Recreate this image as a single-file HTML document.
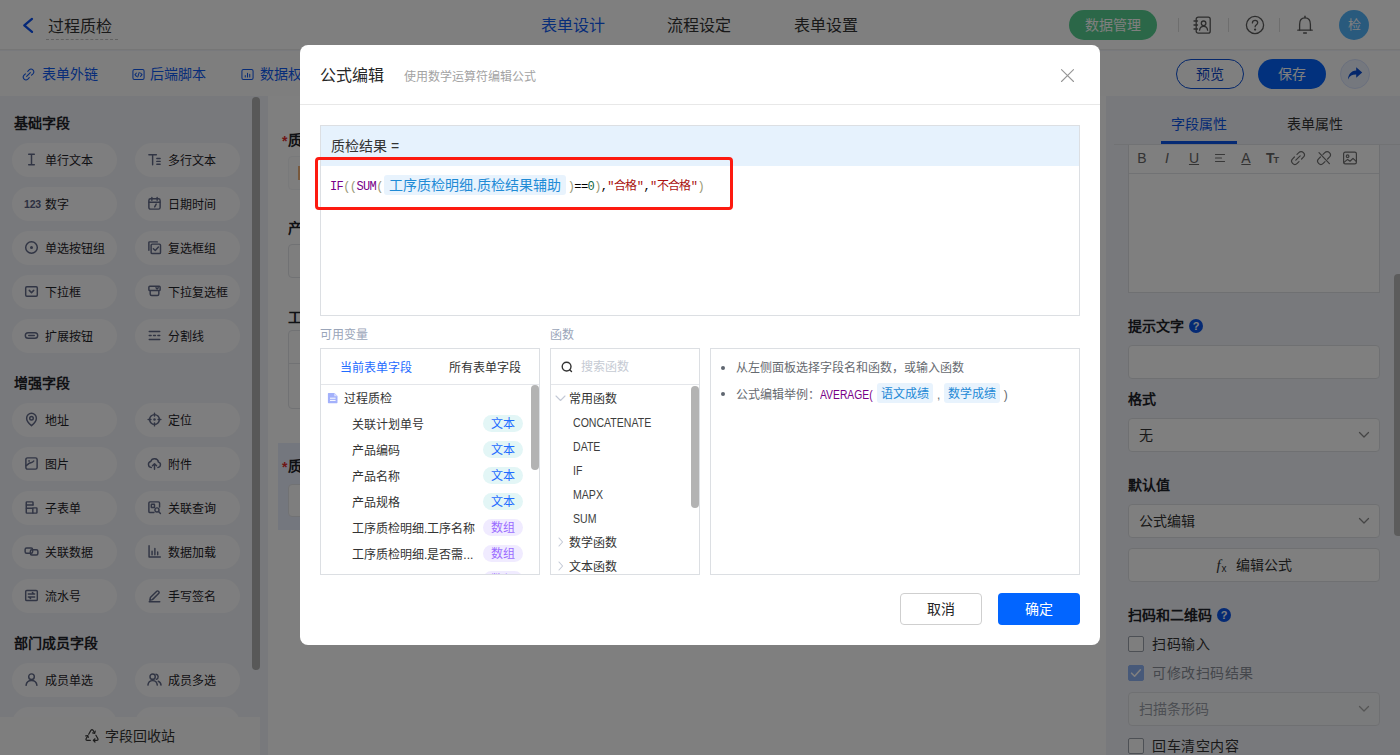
<!DOCTYPE html>
<html lang="zh-CN">
<head>
<meta charset="utf-8">
<title>公式编辑</title>
<style>
*{box-sizing:border-box;margin:0;padding:0}
html,body{width:1400px;height:755px;overflow:hidden;background:#f1f3f8}
body{font-family:"Liberation Sans",sans-serif;font-size:14px;color:#1f2329;position:relative}
.abs{position:absolute}
svg{display:block}
/* ---------- top bar ---------- */
#top{position:absolute;left:0;top:0;width:1400px;height:50px;background:#fff;border-bottom:1px solid #ececec}
#top .title{position:absolute;left:46px;top:15px;font-size:16px;line-height:24px;color:#333;border-bottom:1px dashed #c4c4c4;padding:0 0 0 2px;width:72px;white-space:nowrap}
#top .tab{position:absolute;top:14px;font-size:16px;line-height:24px;color:#333;white-space:nowrap}
#top .tab.on{color:#0f5af2}
#top .green{position:absolute;left:1069px;top:10px;width:88px;height:30px;border-radius:15px;background:#56cf90;color:#fff;font-size:14px;line-height:31px;text-align:center}
#top .sep{position:absolute;top:18px;width:1px;height:14px;background:#dcdcdc}
#top .avatar{position:absolute;left:1339px;top:10px;width:30px;height:30px;border-radius:15px;background:#52b4fb;color:#fff;font-size:13px;line-height:30px;text-align:center}
/* ---------- tool bar ---------- */
#bar{position:absolute;left:0;top:51px;width:1400px;height:45px;background:#fdfdfd}
#bar .lk{position:absolute;top:12px;font-size:14px;line-height:22px;color:#0f5af2;white-space:nowrap}
#bar .pill{position:absolute;top:8px;height:30px;border-radius:15px;font-size:14px;line-height:28px;text-align:center}
/* ---------- sidebar ---------- */
#side{position:absolute;left:0;top:96px;width:260px;height:659px;background:#f1f3f8}
#side h4{position:absolute;left:14px;font-size:14px;line-height:20px;font-weight:bold;color:#1f2329}
#side .f{position:absolute;width:105px;height:34px;border-radius:17px;background:#fdfdfe;font-size:12px;line-height:34px;color:#1f2329;white-space:nowrap}
#side .f span{position:absolute;left:33px;top:1px}
#side .f svg{position:absolute;left:12px;top:9px;width:15px;height:15px}
#side .sb{position:absolute;left:252px;top:1px;width:8px;height:573px;border-radius:4px;background:#b0b0b0}
#side .bin{position:absolute;left:0;top:621px;width:260px;height:38px;background:#fdfdfd;font-size:14px;line-height:38px;color:#333}
/* ---------- canvas ---------- */
#canvas{position:absolute;left:260px;top:96px;width:846px;height:659px;background:#f1f3f8}

#canvas .form{position:absolute;left:8px;top:0;width:838px;height:659px;background:#fff}
#canvas .l{position:absolute;left:20px;font-size:14px;line-height:20px;font-weight:bold;color:#1f2329;white-space:nowrap}
#canvas .l i{font-style:normal;color:#e02d2d;position:absolute;left:-6px;top:1px;font-weight:bold}
#canvas .bx{position:absolute;left:20px;width:380px;height:34px;border:1px solid #e2e4e8;border-radius:4px;background:#fcfcfd}
/* ---------- right panel ---------- */
#right{position:absolute;left:1106px;top:96px;width:294px;height:659px;background:#f1f3f8}

#right .tb{position:absolute;top:17px;font-size:14px;line-height:22px;color:#333;white-space:nowrap}
#right .lb{position:absolute;left:22px;font-size:14px;line-height:20px;font-weight:bold;color:#1f2329;white-space:nowrap}
#right .in{position:absolute;left:22px;width:252px;height:34px;border:1px solid #dfe1e5;border-radius:4px;background:#fff;font-size:14px;line-height:32px;color:#333;padding-left:10px;white-space:nowrap}
#right .q{position:absolute;width:14px;height:14px;border-radius:7px;background:#0b55e8;color:#fff;font-size:11px;font-weight:bold;line-height:14px;text-align:center}
#right .ck{position:absolute;left:22px;width:16px;height:16px;border:1px solid #9aa0ab;border-radius:2px;background:#fdfdfd}
#right .ct{position:absolute;left:46px;font-size:14px;letter-spacing:.55px;line-height:20px;color:#333;white-space:nowrap}
#right .ti{position:absolute;top:53px;font-size:14px;line-height:18px;color:#666;width:20px;text-align:center}
/* ---------- overlay + modal ---------- */
#mask{position:absolute;left:0;top:0;width:1400px;height:755px;background:rgba(0,0,0,.5)}
#modal{position:absolute;left:300px;top:45px;width:800px;height:600px;background:#fff;border-radius:8px}

#modal .hd{position:absolute;left:0;top:0;width:800px;height:60px;border-bottom:1px solid #e8e8e8}
#modal .hd b{position:absolute;left:20px;top:19px;font-size:16px;line-height:24px;font-weight:normal;color:#262626;white-space:nowrap}
#modal .hd span{position:absolute;left:104px;top:23px;font-size:12px;line-height:18px;color:#a3a3a3;white-space:nowrap}
#ed{position:absolute;left:20px;top:80px;width:760px;height:191px;border:1px solid #dcdfe3;background:#fff}
#ed .nm{position:absolute;left:0;top:0;width:758px;height:40px;background:#e6f2fd;font-size:14px;line-height:40px;padding-left:10px;color:#333;white-space:pre}
#ed .ln{position:absolute;left:9px;top:49px;height:24px;line-height:24px;font-family:"Liberation Mono",monospace;font-size:12px;letter-spacing:-.6px;color:#000;white-space:pre}
#ed .k{color:#708}#ed .b{color:#997}#ed .n{color:#164}#ed .s{color:#a11}
#ed .chip{display:inline-block;vertical-align:top;margin:0 2px 0 1px;height:20px;line-height:20px;padding:0 5px;border-radius:3px;background:#e8f3fd;color:#1f8bd6;font-family:"Liberation Sans",sans-serif;font-size:14px;letter-spacing:0}
#redbox{position:absolute;left:15px;top:112px;width:418px;height:53px;border:3px solid #fd1a10;border-radius:4px}
#modal .cap{position:absolute;top:281px;font-size:12px;line-height:18px;color:#9aa5b9;white-space:nowrap}
#modal .box{position:absolute;top:303px;height:227px;border:1px solid #dcdfe3;background:#fff;overflow:hidden}
#modal .box .hr{position:absolute;left:0;top:35px;width:100%;height:1px;background:#e4e6ea}
#modal .box .t{position:absolute;margin-top:1px;font-size:12px;line-height:18px;color:#333;white-space:nowrap}
#modal .tag{position:absolute;left:162px;width:40px;height:17px;margin-top:-1px;border-radius:9px;font-size:12px;line-height:19px;text-align:center;overflow:hidden}
#modal .tag.a{background:#e3f6f6;color:#1f6cff}
#modal .tag.g{background:#f0ebff;color:#9a6bff}
#modal .sbar{position:absolute;width:8px;border-radius:4px;background:#b3b3b3}
#modal .fn{position:absolute;left:22px;font-size:12px;line-height:18px;color:#3d3d3d;white-space:nowrap;transform:scaleX(.88);transform-origin:0 50%}
#modal .hp{position:absolute;left:25px;margin-top:1px;font-size:12px;line-height:20px;color:#666a70;white-space:nowrap}
#modal .hp i{position:absolute;left:-15px;top:8px;width:4px;height:4px;border-radius:2px;background:#5f6670}
#modal .hp .c{display:inline-block;position:relative;top:-1px;height:20px;line-height:22px;margin:0 .4px;padding:0 4px;border-radius:3px;background:#e8f3fd;color:#2389d6;letter-spacing:0}
#modal .btn{position:absolute;top:548px;width:82px;height:32px;border-radius:4px;font-size:14px;line-height:30px;text-align:center}
</style>
</head>
<body>
<div id="top">
<svg class="abs" style="left:20px;top:15px" width="16" height="21" viewBox="0 0 16 21"><path d="M12 3.9 L4.3 10.4 L12 16.9" fill="none" stroke="#0a50f0" stroke-width="2.3" stroke-linecap="round" stroke-linejoin="round"/></svg>
<div class="title">过程质检</div>
<div class="tab on" style="left:541px">表单设计</div>
<div class="tab" style="left:667px">流程设定</div>
<div class="tab" style="left:794px">表单设置</div>
<div class="green">数据管理</div>
<div class="sep" style="left:1178px"></div>
<svg class="abs" style="left:1193px;top:16px" width="19" height="19" viewBox="0 0 19 19" fill="none" stroke="#5a5a5a" stroke-width="1.3" stroke-linecap="round" stroke-linejoin="round"><rect x="3.2" y="1.2" width="14" height="16" rx="2"/><path d="M1 5h3.5M1 9h3.5M1 13h3.5"/><circle cx="10.6" cy="7.3" r="2.3"/><path d="M6.6 14.2c.3-2.6 1.9-3.8 4-3.8s3.7 1.2 4 3.8"/></svg>
<div class="sep" style="left:1228px"></div>
<svg class="abs" style="left:1245px;top:15px" width="20" height="20" viewBox="0 0 20 20" fill="none" stroke="#5a5a5a" stroke-width="1.3" stroke-linecap="round"><circle cx="10" cy="10" r="8.6"/><path d="M7.4 7.9c0-1.6 1.1-2.6 2.7-2.6s2.6 1 2.6 2.4c0 1.9-2.6 2-2.6 4.1"/><circle cx="10.1" cy="14.6" r=".5" fill="#5a5a5a"/></svg>
<div class="sep" style="left:1279px"></div>
<svg class="abs" style="left:1296px;top:15px" width="18" height="20" viewBox="0 0 18 20" fill="none" stroke="#5a5a5a" stroke-width="1.3" stroke-linecap="round" stroke-linejoin="round"><path d="M9 1.2v1.3"/><path d="M3.6 15V9.4C3.6 5.4 5.8 2.9 9 2.9s5.4 2.5 5.4 6.5V15"/><path d="M1.8 15.2h14.4"/><path d="M7.6 18h2.8"/></svg>
<div class="avatar">检</div>
</div>
<div id="bar">
<svg class="abs" style="left:22px;top:17px" width="13" height="13" viewBox="0 0 14 14" fill="none" stroke="#1058ee" stroke-width="1.15" stroke-linecap="round"><path d="M6.2 3.6l1.5-1.5a2.9 2.9 0 0 1 4.1 4.1l-1.5 1.5"/><path d="M7.8 10.4l-1.5 1.5a2.9 2.9 0 0 1-4.1-4.1l1.5-1.5"/><path d="M5 9l4-4"/></svg>
<div class="lk" style="left:42px">表单外链</div>
<svg class="abs" style="left:132px;top:17px" width="13" height="13" viewBox="0 0 14 14" fill="none" stroke="#1058ee" stroke-width="1.1" stroke-linecap="round" stroke-linejoin="round"><rect x="1" y="1.5" width="12" height="11" rx="1.6"/><path d="M4.8 5.4L3.2 7.2l1.6 1.8M9.2 5.4l1.6 1.8-1.6 1.8M7.8 4.8L6.2 9.6"/></svg>
<div class="lk" style="left:150px">后端脚本</div>
<svg class="abs" style="left:241px;top:17px" width="13" height="13" viewBox="0 0 14 14" fill="none" stroke="#1058ee" stroke-width="1.1" stroke-linecap="round" stroke-linejoin="round"><rect x="1" y="1.5" width="12" height="11" rx="1.6"/><path d="M4.6 9.6V8M7 9.6V5.6M9.4 9.6V6.8"/></svg>
<div class="lk" style="left:260px">数据权限</div>
<div class="pill" style="left:1176px;width:68px;border:1px solid #0a4fd6;color:#0a45c9;background:#fff">预览</div>
<div class="pill" style="left:1258px;width:68px;background:#0463fa;color:#fff;line-height:30px">保存</div>
<div class="abs" style="left:1340px;top:8px;width:30px;height:30px;border-radius:15px;background:#eaf0fd;border:1px solid #d5e0fb"></div>
<svg class="abs" style="left:1346px;top:14px" width="18" height="18" viewBox="0 0 18 18"><path d="M10.2 2.2l6 5.3-6 5.3V9.6C6.4 9.5 3.8 10.8 2 14.4 2.3 9.6 5 6 10.2 5.6z" fill="#0a4fd6"/></svg>
</div>
<div id="side">
<h4 style="top:17px">基础字段</h4>
<div class="f" style="left:12px;top:47px"><svg width="16" height="16" viewBox="0 0 16 16" fill="none" stroke="#626a89" stroke-width="1.55" stroke-linecap="round" stroke-linejoin="round"><path d="M5 2.5h6M5 13.5h6M8 2.5v11"/></svg><span>单行文本</span></div>
<div class="f" style="left:135px;top:47px"><svg width="16" height="16" viewBox="0 0 16 16" fill="none" stroke="#626a89" stroke-width="1.55" stroke-linecap="round" stroke-linejoin="round"><path d="M2 3h8M6 3v10.5"/><path d="M10.5 7h3.5M10.5 10h3.5M10.5 13h3.5"/></svg><span>多行文本</span></div>
<div class="f" style="left:12px;top:91px"><b style="position:absolute;left:12px;top:0;font-size:10.5px;letter-spacing:-.2px;color:#596182;line-height:35px">123</b><span>数字</span></div>
<div class="f" style="left:135px;top:91px"><svg width="16" height="16" viewBox="0 0 16 16" fill="none" stroke="#626a89" stroke-width="1.55" stroke-linecap="round" stroke-linejoin="round"><rect x="2" y="3" width="12" height="11" rx="1.8"/><path d="M5.2 1.6v3M10.8 1.6v3M2.2 6.6h11.6"/><path d="M9.8 8.6l-1.6 3"/></svg><span>日期时间</span></div>
<div class="f" style="left:12px;top:135px"><svg width="16" height="16" viewBox="0 0 16 16" fill="none" stroke="#626a89" stroke-width="1.55" stroke-linecap="round" stroke-linejoin="round"><circle cx="8" cy="8" r="6.2"/><circle cx="8" cy="8" r="1.6" fill="#626a89" stroke="none"/></svg><span>单选按钮组</span></div>
<div class="f" style="left:135px;top:135px"><svg width="16" height="16" viewBox="0 0 16 16" fill="none" stroke="#626a89" stroke-width="1.55" stroke-linecap="round" stroke-linejoin="round"><path d="M2 11V2.6A.6.6 0 0 1 2.6 2H11"/><rect x="4.4" y="4.4" width="10" height="10" rx="1.2"/><path d="M6.8 9.3l2 2 3.4-3.8"/></svg><span>复选框组</span></div>
<div class="f" style="left:12px;top:179px"><svg width="16" height="16" viewBox="0 0 16 16" fill="none" stroke="#626a89" stroke-width="1.55" stroke-linecap="round" stroke-linejoin="round"><rect x="1.8" y="3" width="12.4" height="10" rx="1.2"/><path d="M5.6 6.8L8 9.2l2.4-2.4"/></svg><span>下拉框</span></div>
<div class="f" style="left:135px;top:179px"><svg width="16" height="16" viewBox="0 0 16 16" fill="none" stroke="#626a89" stroke-width="1.55" stroke-linecap="round" stroke-linejoin="round"><rect x="2" y="2.4" width="12" height="4.6" rx="1"/><path d="M9.6 4l1.2 1.2L12 4"/><path d="M3.4 7.2v3.4a1.6 1.6 0 0 0 1.6 1.6h6a1.6 1.6 0 0 0 1.6-1.6V7.2"/></svg><span>下拉复选框</span></div>
<div class="f" style="left:12px;top:223px"><svg width="16" height="16" viewBox="0 0 16 16" fill="none" stroke="#626a89" stroke-width="1.55" stroke-linecap="round" stroke-linejoin="round"><rect x="1.4" y="5" width="13.2" height="6" rx="3" stroke-width="1.5"/><path d="M5 8h6" stroke-width="1.5"/></svg><span>扩展按钮</span></div>
<div class="f" style="left:135px;top:223px"><svg width="16" height="16" viewBox="0 0 16 16" fill="none" stroke="#626a89" stroke-width="1.55" stroke-linecap="round" stroke-linejoin="round"><path d="M2.4 3.8h11.2M2.4 12.2h11.2M2.4 8h2M7 8h2M11.6 8h2"/></svg><span>分割线</span></div>
<h4 style="top:277px">增强字段</h4>
<div class="f" style="left:12px;top:307px"><svg width="16" height="16" viewBox="0 0 16 16" fill="none" stroke="#626a89" stroke-width="1.55" stroke-linecap="round" stroke-linejoin="round"><path d="M8 14.6S2.8 10.4 2.8 6.6a5.2 5.2 0 0 1 10.4 0C13.2 10.4 8 14.6 8 14.6z"/><circle cx="8" cy="6.6" r="1.9"/></svg><span>地址</span></div>
<div class="f" style="left:135px;top:307px"><svg width="16" height="16" viewBox="0 0 16 16" fill="none" stroke="#626a89" stroke-width="1.55" stroke-linecap="round" stroke-linejoin="round"><circle cx="8" cy="8" r="5.2"/><circle cx="8" cy="8" r="1.3" fill="#626a89" stroke="none"/><path d="M8 1.2v3M8 11.8v3M1.2 8h3M11.8 8h3"/></svg><span>定位</span></div>
<div class="f" style="left:12px;top:351px"><svg width="16" height="16" viewBox="0 0 16 16" fill="none" stroke="#626a89" stroke-width="1.55" stroke-linecap="round" stroke-linejoin="round"><rect x="2" y="2" width="12" height="12" rx="1.8"/><path d="M2.4 10.2l3-2.4c1.4-1 2.6-.4 3.8-1.4l1.2-1"/><circle cx="5.4" cy="5.2" r=".9" fill="#626a89" stroke="none"/></svg><span>图片</span></div>
<div class="f" style="left:135px;top:351px"><svg width="16" height="16" viewBox="0 0 16 16" fill="none" stroke="#626a89" stroke-width="1.55" stroke-linecap="round" stroke-linejoin="round"><path d="M4.6 12.2A3.2 3.2 0 0 1 4 5.9a4.2 4.2 0 0 1 8.2.6 2.9 2.9 0 0 1-.6 5.7"/><path d="M8 14.2V8.4M5.8 10.4L8 8.2l2.2 2.2"/></svg><span>附件</span></div>
<div class="f" style="left:12px;top:395px"><svg width="16" height="16" viewBox="0 0 16 16" fill="none" stroke="#626a89" stroke-width="1.55" stroke-linecap="round" stroke-linejoin="round"><path d="M9.6 5.2V2.6A.6.6 0 0 0 9 2H3a.6.6 0 0 0-.6.6v10.8a.6.6 0 0 0 .6.6h6.4"/><rect x="9.4" y="8.4" width="4.4" height="5.6" rx=".6"/><path d="M2.6 5.4h7M2.6 8.8h6.6"/></svg><span>子表单</span></div>
<div class="f" style="left:135px;top:395px"><svg width="16" height="16" viewBox="0 0 16 16" fill="none" stroke="#626a89" stroke-width="1.55" stroke-linecap="round" stroke-linejoin="round"><path d="M13.4 7.4V3.2A1.2 1.2 0 0 0 12.2 2H3.2A1.2 1.2 0 0 0 2 3.2v9a1.2 1.2 0 0 0 1.2 1.2h4.2"/><rect x="4.6" y="4.6" width="3.4" height="3.4" rx=".4"/><circle cx="10.6" cy="10.6" r="2.2"/><path d="M12.3 12.3l2 2"/></svg><span>关联查询</span></div>
<div class="f" style="left:12px;top:439px"><svg width="16" height="16" viewBox="0 0 16 16" fill="none" stroke="#626a89" stroke-width="1.55" stroke-linecap="round" stroke-linejoin="round"><rect x="1.2" y="4.2" width="8" height="5.6" rx="1.6"/><rect x="6.8" y="6.2" width="8" height="5.6" rx="1.6"/></svg><span>关联数据</span></div>
<div class="f" style="left:135px;top:439px"><svg width="16" height="16" viewBox="0 0 16 16" fill="none" stroke="#626a89" stroke-width="1.55" stroke-linecap="round" stroke-linejoin="round"><path d="M2.2 1.8v12h12"/><path d="M5.4 11.4V7.6M8.4 11.4V4.8M11.4 11.4V8.6"/></svg><span>数据加载</span></div>
<div class="f" style="left:12px;top:483px"><svg width="16" height="16" viewBox="0 0 16 16" fill="none" stroke="#626a89" stroke-width="1.55" stroke-linecap="round" stroke-linejoin="round"><rect x="1.8" y="2.6" width="12.4" height="10.8" rx="1.2"/><path d="M4.6 6.4h6.8M4.6 9.6h6.8M9 4.9l1.6 1.5M7 11.1L5.4 9.6"/></svg><span>流水号</span></div>
<div class="f" style="left:135px;top:483px"><svg width="16" height="16" viewBox="0 0 16 16" fill="none" stroke="#626a89" stroke-width="1.55" stroke-linecap="round" stroke-linejoin="round"><path d="M3.6 10.2l6.8-6.8a1.2 1.2 0 0 1 1.7 0l.5.5a1.2 1.2 0 0 1 0 1.7L5.8 12.4l-2.8.6z"/><path d="M2.4 14.6h11.2"/></svg><span>手写签名</span></div>
<h4 style="top:537px">部门成员字段</h4>
<div class="f" style="left:12px;top:567px"><svg width="16" height="16" viewBox="0 0 16 16" fill="none" stroke="#626a89" stroke-width="1.55" stroke-linecap="round" stroke-linejoin="round"><circle cx="8" cy="5" r="3"/><path d="M2.2 14.2c.4-3.4 2.6-5.2 5.8-5.2s5.4 1.8 5.8 5.2"/></svg><span>成员单选</span></div>
<div class="f" style="left:135px;top:567px"><svg width="16" height="16" viewBox="0 0 16 16" fill="none" stroke="#626a89" stroke-width="1.55" stroke-linecap="round" stroke-linejoin="round"><circle cx="6" cy="5" r="2.8"/><path d="M1 14c.3-3.2 2.2-4.8 5-4.8s4.7 1.6 5 4.8"/><path d="M9.6 2.4a2.8 2.8 0 0 1 .4 5.4M12 9.8c1.8.6 2.8 2 3 4.2"/></svg><span>成员多选</span></div>
<div class="f" style="left:12px;top:611px"><span>部门单选</span></div>
<div class="f" style="left:135px;top:611px"><span>部门多选</span></div>
<div class="sb"></div>
<div class="bin"><svg class="abs" style="left:84px;top:10px" width="16" height="16" viewBox="0 0 16 16" fill="none" stroke="#3c3c3c" stroke-width="1.2" stroke-linecap="round" stroke-linejoin="round"><path d="M4.7 7.3L6.9 3.4Q8 1.7 9.1 3.4L10.5 5.8"/><path d="M8.6 5.9l2.1.4.5-2.1"/><path d="M11.9 8.2l1.9 3.3Q14.6 13.4 12.7 13.4H9.6"/><path d="M11 11.8l-1.7 1.6 1.7 1.6"/><path d="M6.3 13.4H3.3Q1.4 13.4 2.2 11.5L3.5 9.3"/><path d="M1.7 8.8l2.1-.3.5 2"/></svg><span class="abs" style="left:105px;top:0">字段回收站</span></div>
</div>
<div id="canvas"><div class="form">
<div class="l" style="top:34px"><i>*</i>质检单号</div>
<div class="bx" style="top:60px;border-color:#f3f4f6;background:#fdfdfd"></div>
<div class="abs" style="left:30px;top:70px;width:3px;height:14px;background:#f0b27a"></div>
<div class="l" style="top:122px">产品编码</div>
<div class="bx" style="top:148px"></div>
<div class="l" style="top:211px">工序质检明细</div>
<div class="bx" style="top:234px;width:790px;height:79px"></div>
<div class="abs" style="left:21px;top:267px;width:788px;height:1px;background:#e2e4e8"></div>
<div class="abs" style="left:10px;top:347px;width:812px;height:87px;background:#e9effd"></div>
<div class="l" style="top:360px"><i>*</i>质检结果</div>
<div class="bx" style="top:388px;height:33px"></div>
</div></div>
<div id="right">
<div class="tb" style="left:65px;color:#0b55e8">字段属性</div>
<div class="tb" style="left:181px">表单属性</div>
<div class="abs" style="left:8px;top:48px;width:286px;height:1px;background:#e3e5e9"></div>
<div class="abs" style="left:55px;top:45px;width:76px;height:3px;background:#0b55e8"></div>
<div class="abs" style="left:22px;top:49px;width:252px;height:148px;border:1px solid #dfe1e5;border-top:0;background:#fff"></div>
<div class="abs" style="left:23px;top:77px;width:250px;height:1px;background:#e3e5e9"></div>
<div class="ti" style="left:26px">B</div>
<div class="ti" style="left:51px;font-style:italic">I</div>
<div class="ti" style="left:78px;text-decoration:underline">U</div>
<svg class="abs" style="left:108px;top:56px" width="12" height="12" viewBox="0 0 12 12" fill="none" stroke="#707070" stroke-width="1.2" stroke-linecap="round" stroke-linejoin="round"><path d="M1.5 2.5h9M1.5 6h6M1.5 9.5h9"/></svg>
<div class="ti" style="left:130px;text-decoration:underline">A</div>
<div class="ti" style="left:156px;font-weight:bold;letter-spacing:-1px">T<span style="font-size:9px">T</span></div>
<svg class="abs" style="left:184px;top:54px" width="16" height="16" viewBox="0 0 16 16" fill="none" stroke="#707070" stroke-width="1.2" stroke-linecap="round" stroke-linejoin="round"><path d="M7 4.4l1.8-1.8a3.2 3.2 0 0 1 4.6 4.6L11.6 9"/><path d="M9 11.6l-1.8 1.8a3.2 3.2 0 0 1-4.6-4.6L4.4 7"/><path d="M5.8 10.2l4.4-4.4"/></svg>
<svg class="abs" style="left:210px;top:54px" width="16" height="16" viewBox="0 0 16 16" fill="none" stroke="#707070" stroke-width="1.2" stroke-linecap="round" stroke-linejoin="round"><path d="M7 4.4l1.8-1.8a3.2 3.2 0 0 1 4.6 4.6L11.6 9"/><path d="M9 11.6l-1.8 1.8a3.2 3.2 0 0 1-4.6-4.6L4.4 7"/><path d="M3 2.6l10.4 11"/></svg>
<svg class="abs" style="left:236px;top:54px" width="16" height="16" viewBox="0 0 16 16" fill="none" stroke="#707070" stroke-width="1.2" stroke-linecap="round" stroke-linejoin="round"><rect x="1.6" y="2.2" width="12.8" height="11.6" rx="1.6"/><circle cx="5.6" cy="6.2" r="1.3"/><path d="M2 12.4l3.6-3 2.4 1.8 3-2.8 3.2 3"/></svg>
<div class="lb" style="top:220px">提示文字</div><div class="q" style="left:83px;top:223px">?</div>
<div class="in" style="top:249px"></div>
<div class="lb" style="top:293px">格式</div>
<div class="in" style="top:322px">无</div><svg class="abs" style="left:252px;top:335px" width="12" height="8" viewBox="0 0 12 8" fill="none" stroke="#8a8a8a" stroke-width="1.3" stroke-linecap="round" stroke-linejoin="round"><path d="M1.5 1.5L6 6l4.5-4.5"/></svg>
<div class="lb" style="top:379px">默认值</div>
<div class="in" style="top:408px">公式编辑</div><svg class="abs" style="left:252px;top:421px" width="12" height="8" viewBox="0 0 12 8" fill="none" stroke="#8a8a8a" stroke-width="1.3" stroke-linecap="round" stroke-linejoin="round"><path d="M1.5 1.5L6 6l4.5-4.5"/></svg>
<div class="in" style="top:452px;padding:0;text-align:center"><i style="font-family:'Liberation Serif',serif;font-size:15px">f</i><span style="font-size:10px;position:relative;top:2px;margin:0 9px 0 1px">x</span>编辑公式</div>
<div class="lb" style="top:509px">扫码和二维码</div><div class="q" style="left:111px;top:512px">?</div>
<div class="ck" style="top:540px"></div><div class="ct" style="top:538px">扫码输入</div>
<div class="ck" style="top:569px;background:#8fb2f3;border-color:#8fb2f3"></div>
<svg class="abs" style="left:24px;top:572px" width="12" height="10" viewBox="0 0 12 10" fill="none" stroke="#fff" stroke-width="1.6" stroke-linecap="round" stroke-linejoin="round"><path d="M1.6 5.2l3 3 5.8-6.4"/></svg>
<div class="ct" style="top:567px;color:#8a8f99">可修改扫码结果</div>
<div class="in" style="top:596px;color:#9a9fa8;background:#f5f6f8">扫描条形码</div><svg class="abs" style="left:252px;top:609px" width="12" height="8" viewBox="0 0 12 8" fill="none" stroke="#aaa" stroke-width="1.3" stroke-linecap="round" stroke-linejoin="round"><path d="M1.5 1.5L6 6l4.5-4.5"/></svg>
<div class="ck" style="top:642px"></div><div class="ct" style="top:640px">回车清空内容</div>
<div class="abs" style="left:288px;top:178px;width:6px;height:262px;border-radius:4px 0 0 4px;background:#b9b9b9"></div>
</div>
<div id="mask"></div>
<div id="modal">
<div class="hd"><b>公式编辑</b><span>使用数学运算符编辑公式</span>
<svg class="abs" style="left:760px;top:23px" width="15" height="15" viewBox="0 0 15 15" fill="none" stroke="#969696" stroke-width="1.1" stroke-linecap="round"><path d="M1.5 1.7l12 11.8M13.5 1.7l-12 11.8"/></svg></div>
<div id="ed"><div class="nm">质检结果 =</div>
<div class="ln"><span class="k">IF</span><span class="b">((</span><span class="k">SUM</span><span class="b">(</span><span class="chip">工序质检明细.质检结果辅助</span><span class="b">)</span>==<span class="n">0</span><span class="b">)</span>,<span class="s">"合格"</span>,<span class="s">"不合格"</span><span class="b">)</span></div>
</div>
<div id="redbox"></div>
<div class="cap" style="left:20px">可用变量</div>
<div class="cap" style="left:250px">函数</div>
<div class="box" style="left:20px;width:220px">
<div class="t" style="left:19px;top:9px;color:#1f6cff">当前表单字段</div>
<div class="t" style="left:128px;top:9px">所有表单字段</div>
<div class="hr"></div>
<svg class="abs" style="left:6px;top:43px" width="12" height="12" viewBox="0 0 12 12"><path d="M1.5 1h6l3 3v6.6a.6.6 0 0 1-.6.6H1.5a.6.6 0 0 1-.6-.6V1.6a.6.6 0 0 1 .6-.6z" fill="#a3b1fb"/><path d="M7.2 1v3.2h3.3" fill="#d6dcfe"/><path d="M3 6.2h5.6M3 8.4h5.6" stroke="#fff" stroke-width="1"/></svg>
<div class="t" style="left:23px;top:40px">过程质检</div>
<div class="t" style="left:31px;top:66px">关联计划单号</div><div class="tag a" style="top:67px">文本</div>
<div class="t" style="left:31px;top:92px">产品编码</div><div class="tag a" style="top:93px">文本</div>
<div class="t" style="left:31px;top:118px">产品名称</div><div class="tag a" style="top:119px">文本</div>
<div class="t" style="left:31px;top:144px">产品规格</div><div class="tag a" style="top:145px">文本</div>
<div class="t" style="left:31px;top:170px">工序质检明细.工序名称</div><div class="tag g" style="top:171px">数组</div>
<div class="t" style="left:31px;top:196px">工序质检明细.是否需...</div><div class="tag g" style="top:197px">数组</div>
<div class="t" style="left:31px;top:222px">工序质检明细.质检结果</div><div class="tag g" style="top:223px">数组</div>
<div class="sbar" style="left:210px;top:36px;height:85px"></div>
</div>
<div class="box" style="left:250px;width:150px">
<svg class="abs" style="left:9px;top:11px" width="14" height="14" viewBox="0 0 14 14" fill="none" stroke="#333" stroke-width="1.4" stroke-linecap="round"><circle cx="6.6" cy="6.6" r="4.4"/><path d="M9.9 9.9l1.6 1.6"/></svg>
<div class="t" style="left:30px;top:8px;color:#c5cad3">搜索函数</div>
<div class="hr"></div>
<svg class="abs" style="left:4px;top:46px" width="11" height="7" viewBox="0 0 11 7" fill="none" stroke="#c3c9d6" stroke-width="1.1" stroke-linecap="round" stroke-linejoin="round"><path d="M1 1l4.5 4.5L10 1"/></svg>
<div class="t" style="left:18px;top:40px">常用函数</div>
<div class="fn" style="top:65px">CONCATENATE</div>
<div class="fn" style="top:89px">DATE</div>
<div class="fn" style="top:113px">IF</div>
<div class="fn" style="top:137px">MAPX</div>
<div class="fn" style="top:161px">SUM</div>
<svg class="abs" style="left:7px;top:188px" width="6" height="10" viewBox="0 0 6 10" fill="none" stroke="#c3c9d6" stroke-width="1.1" stroke-linecap="round" stroke-linejoin="round"><path d="M1 1l3.6 4L1 9"/></svg>
<div class="t" style="left:18px;top:184px">数学函数</div>
<svg class="abs" style="left:7px;top:212px" width="6" height="10" viewBox="0 0 6 10" fill="none" stroke="#c3c9d6" stroke-width="1.1" stroke-linecap="round" stroke-linejoin="round"><path d="M1 1l3.6 4L1 9"/></svg>
<div class="t" style="left:18px;top:208px">文本函数</div>
<div class="sbar" style="left:140px;top:37px;height:122px"></div>
</div>
<div class="box" style="left:410px;width:370px">
<div class="hp" style="top:8px"><i></i>从左侧面板选择字段名和函数，或输入函数</div>
<div class="hp" style="top:34px"><i></i>公式编辑举例：<span style="color:#708;display:inline-block;transform:scaleX(.86);transform-origin:0 50%;margin-right:-7.6px">AVERAGE(</span> <span class="c">语文成绩</span> , <span class="c">数学成绩</span> )</div>
</div>
<div class="btn" style="left:600px;border:1px solid #cfcfcf;color:#262626;background:#fff">取消</div>
<div class="btn" style="left:698px;background:#0265ff;color:#fff;line-height:32px">确定</div>
</div>
</body>
</html>
